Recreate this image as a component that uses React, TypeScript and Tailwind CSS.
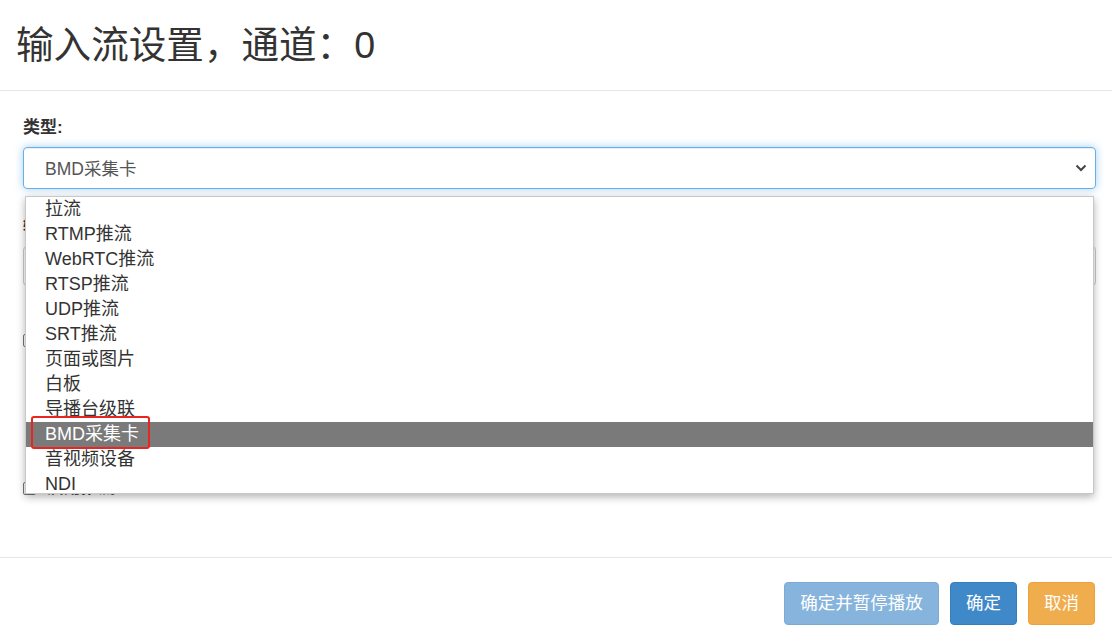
import React from "react";

const items = [
  "拉流",
  "RTMP推流",
  "WebRTC推流",
  "RTSP推流",
  "UDP推流",
  "SRT推流",
  "页面或图片",
  "白板",
  "导播台级联",
  "BMD采集卡",
  "音视频设备",
  "NDI",
];

export default function App() {
  return (
    <div
      className="w-[1112px] h-[641px] bg-white text-[#333] flex flex-col overflow-hidden"
      style={{ fontFamily: '"Liberation Sans", "Noto Sans CJK SC", sans-serif' }}
    >
      {/* header */}
      <div className="h-[91px] shrink-0 border-b border-[#e5e5e5] flex items-center pl-[16px] pt-[2px]">
        <h4 className="text-[37.6px] leading-none text-[#333] font-normal">输入流设置，通道：0</h4>
      </div>

      {/* body */}
      <div className="relative h-[466px] shrink-0 pl-[23px] pr-[16px] pt-[26px]">
        <label className="block text-[17px] font-bold leading-[22px] text-[#333]">类型:</label>
        <div className="relative mt-[8px] h-[42px] rounded-[4px] border border-[#66afe9] shadow-[inset_0_1px_1px_rgba(0,0,0,0.075),0_0_8px_rgba(102,175,233,0.6)] flex items-center pl-[21px] pr-[12px] pt-[2px]">
          <span className="text-[17.5px] text-[#555]">BMD采集卡</span>
          <svg className="absolute right-[8px] top-[15px]" width="12" height="10" viewBox="0 0 12 10">
            <path d="M1.5 2.5 L6 7 L10.5 2.5" fill="none" stroke="#444" strokeWidth="2" />
          </svg>
        </div>

        {/* hidden fields behind dropdown */}
        <label className="block mt-[27px] text-[14px] font-bold leading-[20px] text-[#333]">输入源:</label>
        <div className="mt-[10px] h-[40px] rounded-[4px] border border-[#ccc]"></div>
        <div className="mt-[44px] flex items-center gap-[8px]">
          <span className="w-[13px] h-[13px] border border-[#777] rounded-[2px]"></span>
          <span className="text-[14px] font-bold">自动重连</span>
        </div>
        <div className="mt-[128px] flex items-center gap-[11px]">
          <span className="w-[13px] h-[13px] border border-[#777] rounded-[2px]"></span>
          <span className="text-[17px] font-bold leading-[18px]">启用推流</span>
        </div>

        {/* dropdown list */}
        <div className="absolute left-[25px] top-[105px] w-[1069px] h-[298px] bg-white border border-[#c8c8c8] shadow-[0_3px_8px_rgba(0,0,0,0.3)] overflow-hidden">
          {items.map((it) => {
            const sel = it === "BMD采集卡";
            return (
              <div
                key={it}
                className={
                  sel
                    ? "h-[25px] leading-[25px] pl-[19px] text-[18px] bg-[#7a7a7a] text-white"
                    : "h-[25px] leading-[25px] pl-[19px] text-[18px] text-[#333]"
                }
              >
                {it}
              </div>
            );
          })}
        </div>
        {/* red highlight */}
        <div className="absolute left-[31px] top-[325px] w-[119px] h-[33px] border-[2.5px] border-[#e8251f] rounded-[3px]"></div>
      </div>

      {/* footer */}
      <div className="flex-1 border-t border-[#e5e5e5] flex justify-end items-start pt-[24px] pr-[17px] gap-[11px]">
        <button className="w-[155px] h-[43px] rounded-[4px] bg-[#86b4dd] border border-[#7aaad6] text-white text-[17.5px]">
          确定并暂停播放
        </button>
        <button className="w-[67px] h-[43px] rounded-[4px] bg-[#3f89c9] border border-[#357ebd] text-white text-[17.5px]">
          确定
        </button>
        <button className="w-[67px] h-[43px] rounded-[4px] bg-[#f0ad4e] border border-[#eea236] text-white text-[17.5px]">
          取消
        </button>
      </div>
    </div>
  );
}
